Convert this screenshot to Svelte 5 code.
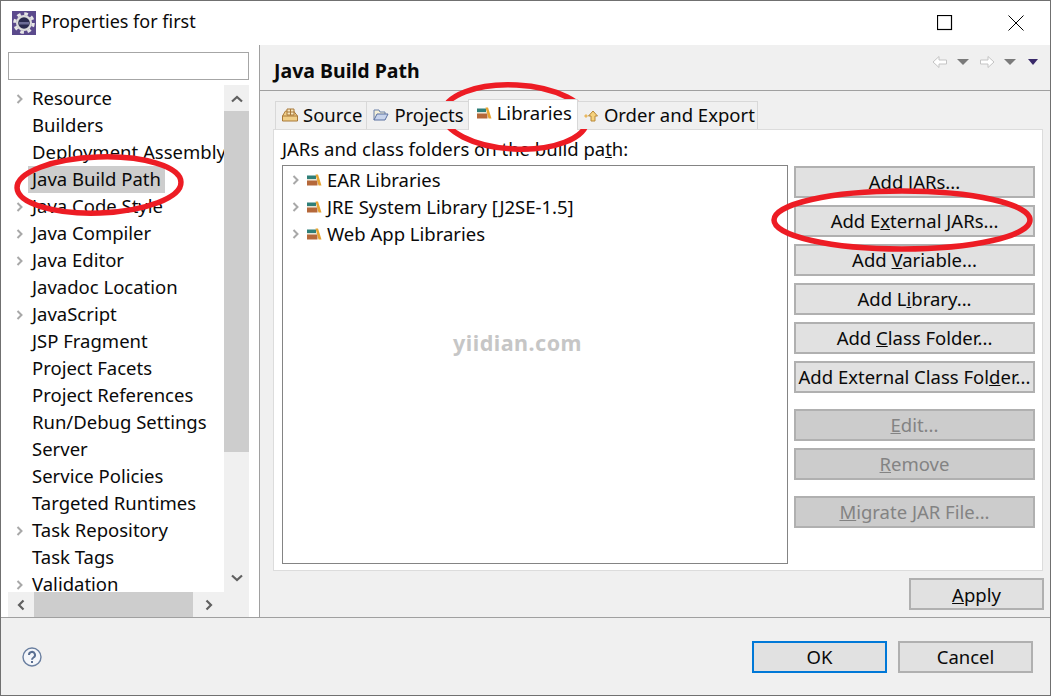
<script>
  const tree = [
    ['Resource', 1], ['Builders', 0], ['Deployment Assembly', 0], ['Java Build Path', 0, 1],
    ['Java Code Style', 1], ['Java Compiler', 1], ['Java Editor', 1], ['Javadoc Location', 0],
    ['JavaScript', 1], ['JSP Fragment', 0], ['Project Facets', 0], ['Project References', 0],
    ['Run/Debug Settings', 0], ['Server', 0], ['Service Policies', 0], ['Targeted Runtimes', 0],
    ['Task Repository', 1], ['Task Tags', 0], ['Validation', 1]
  ];
  const libs = ['EAR Libraries', 'JRE System Library [J2SE-1.5]', 'Web App Libraries'];
</script>

{#snippet arrow()}
  <svg width="10" height="12" viewBox="0 0 10 12"><path d="M2.5 2l4 4-4 4" fill="none" stroke="#a8a8a8" stroke-width="2"/></svg>
{/snippet}

{#snippet lib()}
  <svg class="ico" width="16" height="16" viewBox="0 0 16 16">
    <rect x="1" y="3.500" width="9" height="3.500" fill="#2f7f78"/>
    <rect x="1" y="7" width="10" height="1.500" fill="#e4e4d4"/>
    <rect x="1" y="8.500" width="10.500" height="5" fill="#b5683a"/>
    <path d="M9.500 2.500h2.500l3.500 11h-3z" fill="#e6a432"/>
  </svg>
{/snippet}

<div class="window">
  <header class="title">
    <svg class="appicon" width="24" height="24" viewBox="0 0 24 24">
      <rect width="24" height="24" fill="#5b4a8c"/>
      <circle cx="12" cy="12" r="9.300" fill="none" stroke="#e6e6e6" stroke-width="3" stroke-dasharray="3.650 3.650"/>
      <circle cx="12" cy="12" r="8" fill="#dcdcdc"/>
      <circle cx="12" cy="12" r="5.800" fill="#2a2a4e"/>
      <rect x="7" y="11" width="10" height="2.500" fill="#6c6c96"/>
    </svg>
    <span class="title-text">Properties for first</span>
    <svg class="winctl max" width="16" height="16" viewBox="0 0 16 16"><rect x="0.500" y="0.500" width="14" height="14" fill="none" stroke="#000" stroke-width="1.200"/></svg>
    <svg class="winctl close" width="16" height="16" viewBox="0 0 16 16"><path d="M0.500 0.500l15 15M15.500 0.500l-15 15" stroke="#000" stroke-width="1"/></svg>
  </header>

  <div class="main">
    <aside class="left">
      <div class="filter"></div>
      <div class="treewrap">
        <div class="treecol">
          <div class="tree">
            {#each tree as [name, exp, sel]}
              <div class="row">
                <span class="tw">{#if exp}{@render arrow()}{/if}</span>
                <span class="label" class:sel>{name}</span>
              </div>
            {/each}
          </div>
          <div class="hbar">
            <span class="hbtn"><svg width="12" height="12" viewBox="0 0 12 12"><path d="M8.500 1.500L4 6l4.500 4.500" fill="none" stroke="#606060" stroke-width="2.200"/></svg></span>
            <span class="hthumb"></span>
            <span class="hbtn"><svg width="12" height="12" viewBox="0 0 12 12"><path d="M3.500 1.500L8 6l-4.500 4.500" fill="none" stroke="#606060" stroke-width="2.200"/></svg></span>
          </div>
        </div>
        <div class="vbar">
          <span class="vbtn"><svg width="12" height="12" viewBox="0 0 12 12"><path d="M1 8.500L6 4l5 4.500" fill="none" stroke="#606060" stroke-width="2.200"/></svg></span>
          <span class="vthumb"></span>
          <span class="vbtn down"><svg width="12" height="12" viewBox="0 0 12 12"><path d="M1 3.500L6 8l5-4.500" fill="none" stroke="#606060" stroke-width="2.200"/></svg></span>
        </div>
      </div>
    </aside>

    <section class="right">
      <div class="pagehead">
        <h1>Java Build Path</h1>
        <div class="navs">
          <svg width="16" height="14" viewBox="0 0 16 14"><path d="M1 7l6-5.500v3.500h7.500v4H7v3.500z" fill="#fff" stroke="#c4c4c4"/></svg>
          <svg width="12" height="8" viewBox="0 0 12 8"><path d="M0 1h12L6 7z" fill="#7a7a7a"/></svg>
          <svg class="gap" width="16" height="14" viewBox="0 0 16 14"><path d="M15 7L9 1.500v3.500H1.500v4H9v3.500z" fill="#fff" stroke="#c4c4c4"/></svg>
          <svg width="12" height="8" viewBox="0 0 12 8"><path d="M0 1h12L6 7z" fill="#7a7a7a"/></svg>
          <svg class="gap2" width="12" height="8" viewBox="0 0 12 8"><path d="M1 1h10L6 7z" fill="#3a2a6a"/></svg>
        </div>
      </div>

      <div class="tabs">
        <div class="tab">
          <svg class="ico" width="16" height="16" viewBox="0 0 16 16">
            <path d="M0.500 9l3-5h8l4 5v5H0.500z" fill="#f0cf88" stroke="#a87838"/>
            <path d="M5 2v6h7V2zM8.500 2v6M5 5h7" stroke="#a87838" fill="#f6e6c0"/>
            <path d="M0.500 9h15" stroke="#a87838"/>
          </svg>
          <span>Source</span>
        </div>
        <div class="tab">
          <svg class="ico" width="16" height="16" viewBox="0 0 16 16">
            <path d="M1 13V3h5l1 2h5v2" fill="#f4f0d8" stroke="#6a80a8"/>
            <path d="M1 13l3-6h11l-3 6z" fill="#c8d4ec" stroke="#5a70a0"/>
          </svg>
          <span>Projects</span>
        </div>
        <div class="tab active">{@render lib()}<span>Libraries</span></div>
        <div class="tab last">
          <svg class="ico" width="16" height="16" viewBox="0 0 16 16">
            <path d="M10 4l4.500 5H12v5H8V9H5.500z" fill="#f6d27c" stroke="#b88838"/>
            <path d="M1 9l2-2 2 2-2 2z" fill="#e8b860"/>
          </svg>
          <span>Order and Export</span>
        </div>
      </div>

      <div class="card">
        <div class="hint">JARs and class folders on the build pa<u>t</u>h:</div>
        <div class="body">
          <div class="libbox">
            {#each libs as l}
              <div class="librow">{@render arrow()}{@render lib()}<span>{l}</span></div>
            {/each}
          </div>
          <div class="buttons">
            <button>Add JARs...</button>
            <button>Add E<u>x</u>ternal JARs...</button>
            <button>Add <u>V</u>ariable...</button>
            <button>Add L<u>i</u>brary...</button>
            <button>Add <u>C</u>lass Folder...</button>
            <button>Add External Class Fol<u>d</u>er...</button>
            <button class="off sep"><u>E</u>dit...</button>
            <button class="off"><u>R</u>emove</button>
            <button class="off sep"><u>M</u>igrate JAR File...</button>
          </div>
        </div>
      </div>

      <div class="applyrow"><button class="wide"><u>A</u>pply</button></div>
    </section>
  </div>

  <footer class="foot">
    <svg class="help" width="20" height="20" viewBox="0 0 20 20">
      <circle cx="10" cy="10" r="9" fill="#f4f6fa" stroke="#6a7fa0" stroke-width="1.400"/>
      <path d="M7 8a3 3 0 1 1 4.500 2.500c-1 .6-1.500 1-1.500 2.300" fill="none" stroke="#5a6f92" stroke-width="2"/>
      <rect x="9" y="14" width="2" height="2" fill="#5a6f92"/>
    </svg>
    <button class="wide ok">OK</button>
    <button class="wide">Cancel</button>
  </footer>

  <div class="mark">yiidian.com</div>

  <svg class="marks" width="1051" height="696" viewBox="0 0 1051 696">
    <g fill="none" stroke="#ed1c24" stroke-width="5.500">
      <ellipse cx="99" cy="185" rx="82" ry="28" transform="rotate(-2 99 185)"/>
      <ellipse cx="515" cy="117" rx="72" ry="32" transform="rotate(3 515 117)"/>
      <ellipse cx="902" cy="220" rx="128" ry="29"/>
    </g>
  </svg>
</div>

<style>
  :global(body) { margin: 0; }
  .window {
    position: relative;
    width: 1051px; height: 696px; box-sizing: border-box;
    border: 1px solid #707070; background: #f0f0f0;
    display: flex; flex-direction: column; overflow: hidden;
    font-family: "Noto Sans", "Open Sans", sans-serif; font-size: 18.500px; color: #0a0a0a;
  }
  .title { height: 44px; background: #fff; display: flex; align-items: center; padding-left: 11px; flex: none; }
  .appicon { margin-right: 5px; }
  .title-text { font-size: 18px; flex: 1; padding-bottom: 4px; }
  .winctl.max { margin-right: 55px; }
  .winctl.close { margin-right: 26px; }
  .main { flex: 1; display: flex; min-height: 0; border-bottom: 1px solid #a0a0a0; }
  .left { width: 241px; background: #fff; border-right: 1px solid #a0a0a0; padding: 7px 10px 0 7px; display: flex; flex-direction: column; flex: none; }
  .filter { height: 26px; border: 1px solid #a6a6a6; flex: none; }
  .treewrap { flex: 1; display: flex; margin-top: 5px; min-height: 0; }
  .treecol { flex: 1; min-width: 0; display: flex; flex-direction: column; }
  .tree { flex: 1; overflow: hidden; min-height: 0; }
  .row { height: 27px; display: flex; align-items: center; white-space: nowrap; flex: none; }
  .tw { width: 24px; padding-left: 7px; box-sizing: border-box; flex: none; display: flex; }
  .label { padding: 0 4px 2px 0; }
  .label.sel { background: #cdcdcd; height: 27px; line-height: 25px; margin-left: -4px; padding: 0 4px 2px; box-sizing: border-box; }
  .hbar { height: 25px; background: #f0f0f0; display: grid; grid-template-columns: 26px 159px 32px 1fr; margin-right: -25px; flex: none; }
  .hbtn { display: flex; align-items: center; justify-content: center; }
  .hthumb { background: #cdcdcd; }
  .vbar { width: 25px; background: #f0f0f0; display: flex; flex-direction: column; margin-bottom: 25px; flex: none; }
  .vbtn { height: 26px; padding-top: 2px; box-sizing: border-box; display: flex; align-items: center; justify-content: center; flex: none; }
  .vbtn.down { margin-top: auto; height: 30px; }
  .vthumb { height: 341px; background: #cdcdcd; }
  .right { flex: 1; min-width: 0; display: flex; flex-direction: column; }
  .pagehead { height: 45px; flex: none; border-bottom: 1px solid #a0a0a0; display: flex; align-items: center; padding: 0 11px 0 14px; justify-content: space-between; background: #f0f0f0; }
  h1 { font-size: 19.500px; font-weight: 700; margin: 6px 0 0; }
  .navs { display: flex; gap: 9px; align-items: center; align-self: flex-start; margin-top: 10px; }
  .navs .gap { margin-left: 1px; }
  .navs .gap2 { margin-left: 2px; }
  .tabs { display: flex; padding-left: 16px; margin-top: 8px; height: 30px; align-items: flex-end; flex: none; position: relative; z-index: 1; }
  .tab { height: 28px; display: flex; align-items: center; padding: 0 4px 2px 6px; gap: 5px; background: #f0f0f0; border: 1px solid #d8d8d8; border-bottom: none; margin-left: -1px; box-sizing: border-box; white-space: nowrap; }
  .tab.active { height: 31px; background: #fff; padding: 0 5px 5px 7px; margin-bottom: -1px; }
  .tab.last { padding-left: 5px; padding-right: 2px; }
  .ico { flex: none; }
  .card { margin: 0 7px 0 13px; height: 442px; flex: none; background: #fff; border: 1px solid #dcdcdc; box-sizing: border-box; padding: 8px 7px 0 8px; }
  .hint { height: 27px; line-height: 22px; }
  .body { display: flex; gap: 6px; }
  .libbox { width: 506px; height: 399px; box-sizing: border-box; border: 1px solid #848484; background: #fff; padding-top: 1px; flex: none; }
  .librow { height: 27px; display: flex; align-items: center; padding: 0 0 2px 8px; box-sizing: border-box; gap: 5px; white-space: nowrap; }
  .buttons { flex: 1; display: flex; flex-direction: column; gap: 7px; padding-top: 1px; }
  button { font: inherit; color: #0a0a0a; height: 32px; box-sizing: border-box; background: #e1e1e1; border: 2px solid #b0b0b0; padding: 0 0 2px; white-space: nowrap; flex: none; }
  button.off { background: #ccc; color: #838383; }
  button.sep { margin-top: 9px; }
  button.wide { width: 135px; padding: 0; }
  .applyrow { display: flex; justify-content: flex-end; padding: 7px 6px 0 0; }
  .foot { height: 77px; flex: none; display: flex; align-items: center; gap: 11px; padding: 0 17px 0 21px; background: #f0f0f0; }
  .help { margin-right: auto; }
  button.ok { border-color: #0078d7; }
  .mark { position: absolute; left: 452px; top: 327px; font-size: 21.500px; font-weight: 700; color: #c6c6c6; letter-spacing: 0.500px; }
  .marks { position: absolute; left: -1px; top: -1px; pointer-events: none; }
</style>
